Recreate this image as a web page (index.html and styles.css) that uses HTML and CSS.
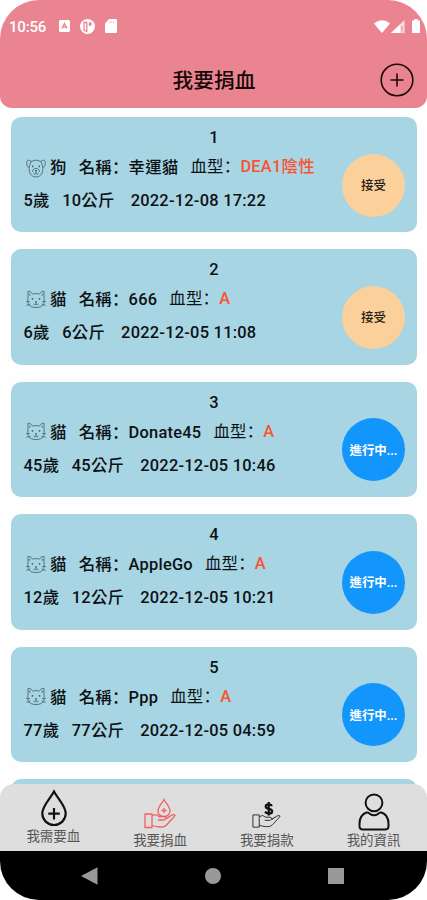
FILE: index.html
```html
<!DOCTYPE html>
<html lang="zh-Hant">
<head>
<meta charset="utf-8">
<meta name="viewport" content="width=device-width, initial-scale=1">
<title>我要捐血</title>
<link rel="stylesheet" href="styles.css">
</head>
<body>
<svg class="defs" width="0" height="0" aria-hidden="true">
  <symbol id="dog" viewBox="0 0 20 20"><path d="M5 3.500Q10 .5 15 3.500M5 3.500C2 .5.3 3 .8 6c.3 3 1.500 3.800 2.600 2.500L5 3.500M15 3.500c3-3 4.700-.5 4.200 2.500-.3 3-1.500 3.800-2.600 2.500L15 3.500M3.400 8.500c-1 5.500 1.300 10.300 6.600 10.500 5.300-.2 7.600-5 6.600-10.500M6.500 14c0-2.500 1.500-3.500 3.500-3.500s3.500 1 3.500 3.500M10 13.500v2M7.500 15.500q1.200 1.500 2.500 0 1.300 1.500 2.500 0"/><path class="fill" d="M6 7.500h1.500v1.700H6zM12.500 7.500H14v1.700h-1.500zM9 12h2v1.500H9z"/></symbol>
  <symbol id="cat" viewBox="0 0 20 20"><path d="M2 8V1.300q2.500-.3 4.700 2.700 3.300-.8 6.600 0Q15.500 1 18 1.300V8c1 6-1 9.500-8 9.500S1 14 2 8zM.3 11.500h3.500M.3 15.500l4-1.500M19.700 11.500h-3.500M19.700 15.500l-4-1.500M10 12.500V14M7.500 14q1.200 1.500 2.500 0 1.300 1.500 2.500 0M3.800 3.500v2.300M16.200 3.500v2.300"/><path class="fill" d="M5.700 8h1.500v1.700H5.700zM12.800 8h1.500v1.700h-1.500zM9 11.300h2v1.200H9z"/></symbol>
  <symbol id="hand" viewBox="0 0 32 17"><path d="M1 2h7v13.500H1zM8 4q4-3 7 .5h5q2.500.8 1.500 2.500-.7 1-2.500 1h-5M22 7l5-3.500Q30 2 31 3.200q-1 2-3.500 4.300l-5 5.500Q20 15.500 16 15q-4-.3-8-1.500M22 7l4-3"/></symbol>
</svg>
<div class="phone">
  <header class="header">
    <div class="status">
      <span class="clock">10:56</span>
      <svg class="st-a" viewBox="0 0 11 12"><rect width="11" height="12" rx="1.500" fill="#fff"/><path d="M3 8.500 5.500 3.500 8 8.500M4.200 7h2.600" fill="none" stroke="#e98490" stroke-width="1.300"/></svg>
      <svg class="st-p" viewBox="0 0 15 15"><circle cx="7.500" cy="7.500" r="7.500" fill="#fff"/><path d="M4 3.500v7.500l2.800 1.500V3.500z" fill="none" stroke="#e98490" stroke-width="1.300"/><path d="M8.800 3.300h2.700v3.500H8.800z" fill="#e98490"/></svg>
      <svg class="st-sd" viewBox="0 0 12 14"><path d="M4 0h7q1 0 1 1v12q0 1-1 1H1q-1 0-1-1V4.500z" fill="#fff"/><path d="M4.500 2.200v2M6.500 2.200v2M8.500 2.200v2" stroke="#f3b8be" stroke-width=".8"/></svg>
      <span class="spacer"></span>
      <svg class="wifi" viewBox="0 0 16 13"><path d="M0 3.500Q8-3 16 3.500L8 13z" fill="#fff"/></svg>
      <svg class="signal" viewBox="0 0 14 13"><path d="M0 13 13.500 0v13z" fill="#f9dcdf"/><path d="M0 13 9 4.500V13z" fill="#fff"/><path d="M11 6v4.500M11 11.300v1" stroke="#e98490" stroke-width="1.200"/></svg>
      <svg class="battery" viewBox="0 0 8 14"><path d="M2.300 0h3.400v1.500H8V14H0V1.500h2.300z" fill="#fff"/></svg>
    </div>
    <div class="titlebar">
      <h1>我要捐血</h1>
      <svg class="add" viewBox="0 0 34 34"><circle cx="17" cy="17" r="15.800"/><path d="M17 10.500v13M10.500 17h13"/></svg>
    </div>
  </header>

  <main class="list">
    <article class="card">
      <div class="num">1</div>
      <div class="row who"><svg class="pet"><use href="#dog"/></svg><span class="kind">狗</span><span class="name">名稱<i lang="zh-Hans">：</i>幸運貓</span><span class="blood">血型<i lang="zh-Hans">：</i><b>DEA1陰性</b></span></div>
      <div class="row facts"><span class="age">5歲</span><span class="kg">10公斤</span><span>2022-12-08 17:22</span></div>
      <button class="action accept">接受</button>
    </article>
    <article class="card">
      <div class="num">2</div>
      <div class="row who"><svg class="pet"><use href="#cat"/></svg><span class="kind">貓</span><span class="name">名稱<i lang="zh-Hans">：</i>666</span><span class="blood">血型<i lang="zh-Hans">：</i><b>A</b></span></div>
      <div class="row facts"><span class="age">6歲</span><span class="kg">6公斤</span><span>2022-12-05 11:08</span></div>
      <button class="action accept">接受</button>
    </article>
    <article class="card">
      <div class="num">3</div>
      <div class="row who"><svg class="pet"><use href="#cat"/></svg><span class="kind">貓</span><span class="name">名稱<i lang="zh-Hans">：</i>Donate45</span><span class="blood">血型<i lang="zh-Hans">：</i><b>A</b></span></div>
      <div class="row facts"><span class="age">45歲</span><span class="kg">45公斤</span><span>2022-12-05 10:46</span></div>
      <button class="action busy">進行中...</button>
    </article>
    <article class="card">
      <div class="num">4</div>
      <div class="row who"><svg class="pet"><use href="#cat"/></svg><span class="kind">貓</span><span class="name">名稱<i lang="zh-Hans">：</i>AppleGo</span><span class="blood">血型<i lang="zh-Hans">：</i><b>A</b></span></div>
      <div class="row facts"><span class="age">12歲</span><span class="kg">12公斤</span><span>2022-12-05 10:21</span></div>
      <button class="action busy">進行中...</button>
    </article>
    <article class="card">
      <div class="num">5</div>
      <div class="row who"><svg class="pet"><use href="#cat"/></svg><span class="kind">貓</span><span class="name">名稱<i lang="zh-Hans">：</i>Ppp</span><span class="blood">血型<i lang="zh-Hans">：</i><b>A</b></span></div>
      <div class="row facts"><span class="age">77歲</span><span class="kg">77公斤</span><span>2022-12-05 04:59</span></div>
      <button class="action busy">進行中...</button>
    </article>
    <article class="card"></article>
  </main>

  <nav class="tabs">
    <a class="tab first"><svg class="drop" viewBox="0 0 28 38"><path d="M14 2.500C10 10 2.300 17 2.300 24.500a11.700 11.500 0 0 0 23.400 0C25.700 17 18 10 14 2.500zM14 19v11.500M8.300 24.700h11.500"/></svg><span>我需要血</span></a>
    <a class="tab active"><svg class="give" viewBox="0 0 32 32"><path d="M20 2.500c-2 4-6 7-6 11.500a6 5.700 0 0 0 12 0c0-4.500-4-7.500-6-11.500zM20 11v5M17.500 13.500h5"/><use href="#hand" y="15" width="32" height="17"/></svg><span>我要捐血</span></a>
    <a class="tab money"><svg class="pay" viewBox="0 0 30 28"><use href="#hand" y="12" width="30" height="16"/><path class="dollar" d="M20.700 4.700q-1-1.700-3.500-1.700-3 0-3 2.300 0 1.800 3.200 2.400 3.400.7 3.400 2.600 0 2.200-3.400 2.200-2.700 0-3.900-1.900M17.300.5v14"/></svg><span>我要捐款</span></a>
    <a class="tab me"><svg class="person" viewBox="0 0 32 38"><circle cx="16" cy="9.800" r="8.400"/><path d="M8.500 19.500Q1.500 22 1.500 31v2q0 3.500 3.500 3.500h22q3.500 0 3.500-3.500v-2q0-9-7-11.500-2-.3-3.700 1.700-3.800 2.200-7.600 0-1.700-2-3.700-1.700z"/></svg><span>我的資訊</span></a>
  </nav>
  <div class="sysnav">
    <svg viewBox="0 0 18 18"><path d="M0 9 16.500.3v17.400z"/></svg>
    <svg viewBox="0 0 18 18"><circle cx="9" cy="9" r="8"/></svg>
    <svg viewBox="0 0 18 18"><path d="M1 1h16v16H1z"/></svg>
  </div>
</div>
</body>
</html>
```
FILE: styles.css
```css
* { box-sizing: border-box; }
body {
  margin: 0;
  background: #fff;
  color: #0c1114;
  font-family: Roboto, "Noto Sans CJK SC", sans-serif;
}
svg { display: block; flex: none; }
i { font-style: normal; }
.defs { position: absolute; }
.phone {
  width: 427px;
  height: 900px;
  display: flex;
  flex-direction: column;
  overflow: hidden;
  border-radius: 39px;
  background: #fefefe;
}
.header {
  flex: none;
  height: 108px;
  background: #e98490;
  border-radius: 0 0 12px 12px;
}
.status {
  height: 52px;
  display: flex;
  align-items: center;
  padding: 0 7px 0 9px;
  color: #fff;
}
.clock { width: 50px; padding-top: 1px; font-size: 15px; font-weight: 500; letter-spacing: -.2px; }
.st-a { width: 11px; height: 12px; margin-right: 10px; }
.st-p { width: 15px; height: 15px; margin-right: 10px; }
.st-sd { width: 12px; height: 14px; }
.spacer { flex: 1; }
.wifi { width: 16px; height: 13px; margin-right: 1px; }
.signal { width: 14px; height: 13px; margin-right: 7px; }
.battery { width: 8px; height: 14px; }
.titlebar {
  display: grid;
  grid-template-columns: 1fr auto 1fr;
  align-items: center;
  height: 56px;
  padding-right: 13px;
}
h1 {
  grid-column: 2;
  margin: 2px 0 0 14px;
  font-size: 20.700px;
  line-height: 30px;
  font-weight: 500;
  color: #150708;
}
.add {
  width: 34px;
  height: 34px;
  justify-self: end;
  fill: none;
  stroke: #1c090b;
  stroke-width: 1.600;
}
.list {
  flex: 1;
  min-height: 0;
  overflow: hidden;
  display: flex;
  flex-direction: column;
  gap: 17px;
  padding: 9px 10px 0 11px;
  margin-bottom: -14px;
}
.card {
  position: relative;
  flex: none;
  height: 115.400px;
  padding: 10px 0 0 13px;
  background: #a8d5e3;
  border-radius: 10px;
  font-size: 16.400px;
  font-weight: 500;
  letter-spacing: .25px;
  white-space: nowrap;
}
.num { height: 22px; line-height: 22px; text-align: center; padding-right: 13px; }
.row { display: flex; align-items: center; line-height: 24px; }
.who { height: 36px; padding-top: 2px; }
.facts { height: 31px; padding-top: 1px; margin-left: -.5px; }
.pet {
  width: 20px;
  height: 20px;
  margin: -1px 4px 0 2px;
  fill: none;
  stroke: #4d6873;
  stroke-width: .9;
}
.fill { fill: #4d6873; stroke: none; }
.kind { margin-right: 12px; }
.name { margin-right: 12px; }
.blood { font-weight: 400; margin-top: -2px; }
.blood b { font-weight: 500; color: #fa5230; }
.age { margin-right: 12.500px; }
.kg { margin-right: 16px; }
.action {
  position: absolute;
  right: 12px;
  top: 36.500px;
  width: 63px;
  height: 63px;
  padding: 0;
  border: 0;
  border-radius: 50%;
  font: 500 12.400px Roboto, "Noto Sans CJK SC", sans-serif;
}
.accept { background: #fbd09b; color: #272018; }
.busy { background: #1396fb; color: #fff; font-weight: 700; }
.tabs {
  position: relative;
  flex: none;
  height: 67px;
  display: grid;
  grid-template-columns: repeat(4, 1fr);
  background: #dedede;
  border-radius: 14px 14px 0 0;
}
.tab {
  display: flex;
  flex-direction: column;
  align-items: center;
  justify-content: flex-end;
  padding-bottom: 2px;
  font-size: 13.500px;
  line-height: 18px;
  color: #555;
}
.first { padding-bottom: 6px; }
.tab svg { fill: none; stroke: #111; }
.tab .drop { width: 28px; height: 38px; stroke-width: 2.200; margin-left: 1px; }
.tab .give { width: 32px; height: 32px; stroke: #ee6064; stroke-width: 1.300; margin-bottom: 2px; }
.tab .pay { width: 29px; height: 28px; stroke: #333; stroke-width: 1.100; margin-bottom: 2px; }
.tab .dollar { stroke: #111; stroke-width: 2.300; }
.person { width: 32px; height: 38px; stroke-width: 2; }
.sysnav {
  flex: none;
  height: 49px;
  display: flex;
  justify-content: center;
  align-items: center;
  gap: 105px;
  background: #000;
}
.sysnav svg { width: 18px; height: 18px; fill: #999; }
.sysnav svg:first-child { margin-left: -1px; }
```
